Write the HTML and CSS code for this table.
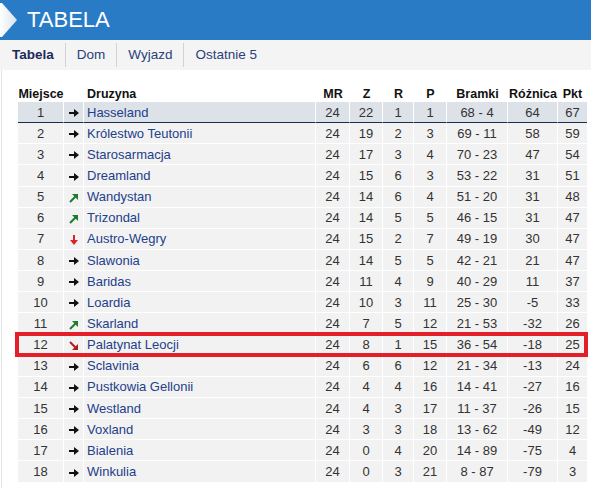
FILE: index.html
```html
<!DOCTYPE html>
<html lang="pl">
  <head>
    <meta charset="UTF-8" />
    <title>Tabela</title>
    <link rel="stylesheet" href="styles.css">
  </head>
  <body>
    <div class="title-bar">
      <svg class="chevron" width="18" height="40" viewBox="0 0 18 40">
        <defs>
          <linearGradient id="chev" x1="0" y1="0" x2="1" y2="0">
            <stop offset="0" stop-color="#ffffff" />
            <stop offset="1" stop-color="#d9e3ee" />
          </linearGradient>
        </defs>
        <polygon points="0,3 2,3 17,20 2,37 0,37" fill="url(#chev)" />
      </svg>
      <h1>TABELA</h1>
    </div>

    <div class="tabs">
      <span class="tab active">Tabela</span>
      <span class="tab">Dom</span>
      <span class="tab">Wyjazd</span>
      <span class="tab">Ostatnie 5</span>
    </div>

    <div class="content">
      <div class="table-wrap">
        <table id="standings">
          <colgroup>
            <col style="width:46px" />
            <col style="width:20px" />
            <col style="width:232px" />
            <col style="width:34px" />
            <col style="width:33px" />
            <col style="width:31px" />
            <col style="width:33px" />
            <col style="width:61px" />
            <col style="width:50px" />
            <col style="width:29px" />
          </colgroup>
          <thead>
            <tr>
              <th>Miejsce</th>
              <th></th>
              <th class="team">Druzyna</th>
              <th>MR</th>
              <th>Z</th>
              <th>R</th>
              <th>P</th>
              <th>Bramki</th>
              <th>Różnica</th>
              <th>Pkt</th>
            </tr>
          </thead>
          <tbody></tbody>
        </table>
        <div class="marked"></div>
      </div>
    </div>

    <script>
      const teams = [
        [1, "same", "Hasseland", 24, 22, 1, 1, "68 - 4", 64, 67],
        [2, "same", "Królestwo Teutonii", 24, 19, 2, 3, "69 - 11", 58, 59],
        [3, "same", "Starosarmacja", 24, 17, 3, 4, "70 - 23", 47, 54],
        [4, "same", "Dreamland", 24, 15, 6, 3, "53 - 22", 31, 51],
        [5, "up", "Wandystan", 24, 14, 6, 4, "51 - 20", 31, 48],
        [6, "up", "Trizondal", 24, 14, 5, 5, "46 - 15", 31, 47],
        [7, "down", "Austro-Wegry", 24, 15, 2, 7, "49 - 19", 30, 47],
        [8, "same", "Slawonia", 24, 14, 5, 5, "42 - 21", 21, 47],
        [9, "same", "Baridas", 24, 11, 4, 9, "40 - 29", 11, 37],
        [10, "same", "Loardia", 24, 10, 3, 11, "25 - 30", -5, 33],
        [11, "up", "Skarland", 24, 7, 5, 12, "21 - 53", -32, 26],
        [12, "drop", "Palatynat Leocji", 24, 8, 1, 15, "36 - 54", -18, 25],
        [13, "same", "Sclavinia", 24, 6, 6, 12, "21 - 34", -13, 24],
        [14, "same", "Pustkowia Gellonii", 24, 4, 4, 16, "14 - 41", -27, 16],
        [15, "same", "Westland", 24, 4, 3, 17, "11 - 37", -26, 15],
        [16, "same", "Voxland", 24, 3, 3, 18, "13 - 62", -49, 12],
        [17, "same", "Bialenia", 24, 0, 4, 20, "14 - 89", -75, 4],
        [18, "same", "Winkulia", 24, 0, 3, 21, "8 - 87", -79, 3],
      ];

      // strzalki trendu
      const arrows = {
        same: '<svg width="10" height="8" viewBox="0 0 10 8"><path d="M0 4H6" stroke="#111" stroke-width="2"/><polygon points="5,0 10,4 5,8" fill="#111"/></svg>',
        up: '<svg width="10" height="10" viewBox="0 0 10 10"><path d="M1 9L6.5 3.5" stroke="#1f7a2c" stroke-width="2"/><polygon points="3,1 9,1 9,7" fill="#1f7a2c"/></svg>',
        down: '<svg width="8" height="10" viewBox="0 0 8 10"><path d="M4 0V6" stroke="#d8232a" stroke-width="2"/><polygon points="0,5 8,5 4,10" fill="#d8232a"/></svg>',
        drop: '<svg width="10" height="10" viewBox="0 0 10 10"><path d="M1 1L6.5 6.5" stroke="#b01c1c" stroke-width="2"/><polygon points="9,3 9,9 3,9" fill="#b01c1c"/></svg>',
      };

      const tbody = document.querySelector("#standings tbody");
      for (const t of teams) {
        const tr = document.createElement("tr");
        if (t[0] === 1) tr.className = "leader";
        tr.innerHTML =
          "<td>" + t[0] + "</td>" +
          '<td class="trend">' + arrows[t[1]] + "</td>" +
          '<td class="team"><a href="#">' + t[2] + "</a></td>" +
          "<td>" + t[3] + "</td>" +
          "<td>" + t[4] + "</td>" +
          "<td>" + t[5] + "</td>" +
          "<td>" + t[6] + "</td>" +
          "<td>" + t[7] + "</td>" +
          "<td>" + t[8] + "</td>" +
          "<td>" + t[9] + "</td>";
        tbody.appendChild(tr);
      }
    </script>
  </body>
</html>
```

FILE: styles.css
```css
body {
  margin: 0;
  background-color: #fff;
  font-family: "Liberation Sans", Arial, sans-serif;
}

.title-bar {
  height: 40px;
  background-color: #2a7bc6;
  display: flex;
  align-items: center;
}
.chevron {
  display: block;
  flex: none;
}
.title-bar h1 {
  margin: 0 0 0 9px;
  font-size: 22px;
  font-weight: normal;
  color: #fff;
  line-height: 40px;
}

.tabs {
  height: 30px;
  background-color: #f4f4f4;
  display: flex;
  align-items: center;
  padding-left: 12px;
}
.tab {
  font-size: 13.5px;
  color: #2b3f78;
  padding: 0 11px;
  line-height: 24px;
  border-left: 1px solid #d2d2d2;
}
.tab:first-child {
  padding-left: 0;
  border-left: none;
}
.tab.active {
  font-weight: bold;
  color: #1c2a5a;
}

.content {
  border-left: 1px solid #e4e4e4;
  margin-left: 1px;
  padding: 15px 0 0 16px;
  height: 403px;
}
.table-wrap {
  position: relative;
  width: 569px;
}

table {
  border-collapse: separate;
  border-spacing: 0;
  table-layout: fixed;
  width: 569px;
  font-size: 13px;
}
th {
  font-size: 12.5px;
  font-weight: bold;
  color: #111;
  height: 17px;
  padding: 0;
  text-align: center;
  white-space: nowrap;
}
th.team {
  text-align: left;
  padding-left: 3px;
}
td {
  height: 20.15px;
  padding: 0;
  text-align: center;
  color: #333;
  background-color: #f2f2f2;
  border-right: 1px solid #fff;
  border-bottom: 1px solid #fff;
  white-space: nowrap;
}
td:last-child {
  border-right: none;
}
td.team {
  text-align: left;
  padding-left: 3px;
}
td.team a {
  color: #23408a;
  text-decoration: none;
}
td.trend svg {
  display: inline-block;
  vertical-align: middle;
}
tr.leader td {
  background-color: #dde2e8;
  border-bottom: 1px solid #1b2d4f;
}

/* ramka zaznaczonej druzyny */
.marked {
  position: absolute;
  left: -3px;
  top: 247px;
  width: 573px;
  height: 25px;
  border: 4px solid #e3202a;
  box-sizing: border-box;
}
```
